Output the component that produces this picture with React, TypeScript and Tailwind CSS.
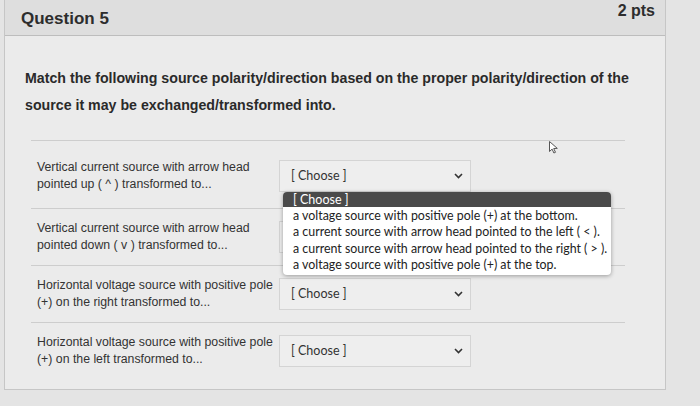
import React from "react"

const rows = [
  ["Vertical current source with arrow head", "pointed up ( ^ ) transformed to..."],
  ["Vertical current source with arrow head", "pointed down ( v ) transformed to..."],
  ["Horizontal voltage source with positive pole", "(+) on the right transformed to..."],
  ["Horizontal voltage source with positive pole", "(+) on the left transformed to..."],
]

const options = [
  "a voltage source with positive pole (+) at the bottom.",
  "a current source with arrow head pointed to the left ( < ).",
  "a current source with arrow head pointed to the right ( > ).",
  "a voltage source with positive pole (+) at the top.",
]

function Chevron() {
  return (
    <svg width="9" height="6" viewBox="0 0 9 6" fill="none" stroke="#333" strokeWidth="1.6">
      <path d="M1 1l3.5 3.5L8 1" />
    </svg>
  )
}

// the select under the open list is covered, so its label is not drawn
function Select({ open, covered }: { open?: boolean; covered?: boolean }) {
  return (
    <div className="relative w-[192px]">
      <div className="h-[32px] flex items-center justify-between pl-[11px] pr-[7px] border border-[#d4d4d4] bg-[#eeeeee] font-['Lato',sans-serif] text-[12.5px] text-[#333]">
        {!covered && <span>[ Choose ]</span>}
        {!covered && <Chevron />}
      </div>
      {open && (
        <div className="absolute left-[4px] top-[32px] w-[328px] z-10 bg-white rounded-[4px] overflow-hidden shadow-[0_1px_4px_rgba(0,0,0,0.35)] font-['Lato',sans-serif] text-[12.4px] leading-[16.3px] text-[#222] whitespace-nowrap">
          <div className="bg-[#4a4a4a] text-white text-[12.5px] px-[10px] h-[15px] leading-[15px]">[ Choose ]</div>
          <div className="pt-[1px] pb-[2px]">
            {options.map((o) => (
              <div key={o} className="px-[10px]">
                {o}
              </div>
            ))}
          </div>
        </div>
      )}
    </div>
  )
}

export default function App() {
  return (
    <div className="w-[700px] h-[406px] bg-[#e4e4e4] pl-[4px] pr-[34px] overflow-hidden font-['Liberation_Sans',Arial,sans-serif] text-[#2d2d2d]">
      <div className="border-x border-b border-[#c6c6c6] bg-[#ebebeb] h-[390px]">
        <div className="h-[36px] bg-[#dedede] border-b border-[#bdbdbd] flex items-start justify-between pl-[16px] pr-[10px]">
          <h2 className="mt-[6px] text-[17px] font-bold">Question 5</h2>
          <span className="mt-[-1px] text-[16px] font-semibold">2 pts</span>
        </div>
        <div className="px-[20px]">
          <p className="mt-[29px] text-[14.2px] font-bold leading-[27px] text-[#2a2a2a]">
            Match the following source polarity/direction based on the proper polarity/direction of the source it may be exchanged/transformed into.
          </p>
          <div className="relative mt-[21px] mx-[6px] mr-[20px]">
            <svg className="absolute right-[65px] top-[0px]" width="12" height="14" viewBox="0 0 12 14" fill="white" stroke="#555" strokeWidth="1">
              <path d="M1.5 1.5v10l2.6-2.4 1.8 3.9 1.6-.7-1.8-3.8 3.6-.1z" />
            </svg>
            {rows.map((r, i) => (
              <div
                key={i}
                className={`border-t border-[#cdcdcd] flex items-center ${i === 0 ? "pt-[18px] pb-[15px]" : "py-[11px]"}`}
              >
                <div className="w-[248px] pl-[6px] text-[12.3px] leading-[17px] text-[#333]">
                  <div>{r[0]}</div>
                  <div>{r[1]}</div>
                </div>
                <Select open={i === 0} covered={i === 1} />
              </div>
            ))}
          </div>
        </div>
      </div>
    </div>
  )
}
